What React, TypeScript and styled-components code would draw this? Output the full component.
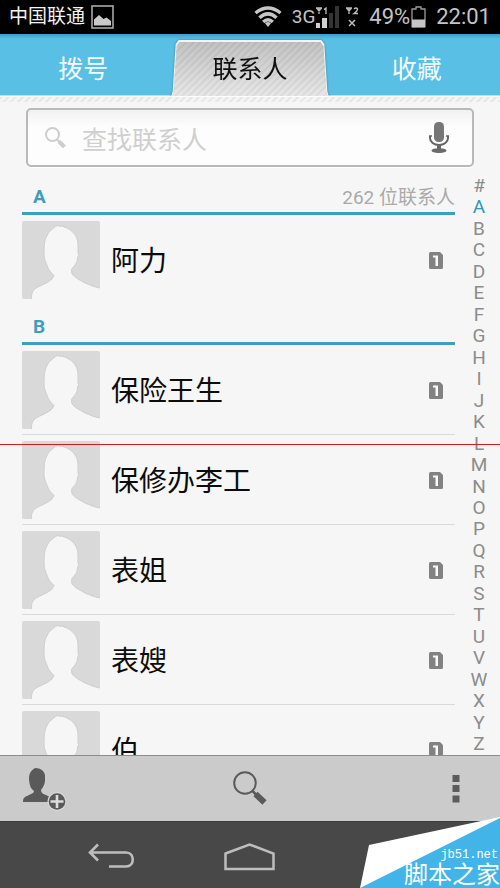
import React from "react";
import styled, { createGlobalStyle, css } from "styled-components";

const GlobalStyle = createGlobalStyle`
  *, *::before, *::after { box-sizing: border-box; }
  body { margin: 0; background: #f6f6f6; }
  button { border: 0; padding: 0; background: none; font: inherit; color: inherit; cursor: pointer; }
  ul, ol, h1, h2, p { margin: 0; padding: 0; list-style: none; }
  svg { display: block; flex: none; }
`;

const Screen = styled.div`
  position: relative;
  display: flex;
  flex-direction: column;
  height: 100vh;
  overflow: hidden;
  background: #f6f6f6;
  font-family: Roboto, "Noto Sans CJK SC", sans-serif;
  color: #0c0c0c;
`;

const StatusBar = styled.header`
  display: flex;
  align-items: center;
  justify-content: space-between;
  flex: none;
  height: 34px;
  padding: 0 9px;
  background: #000;
  color: #c4c4c4;
  font-size: 22px;
  line-height: 38px;
`;

const StatusGroup = styled.div<{ $gap: number }>`
  display: flex;
  align-items: center;
  gap: ${(p) => p.$gap}px;
`;

const Carrier = styled.span`
  color: #f4f4f4;
  font-size: 19px;
`;

const Network = styled.span`
  font-size: 19px;
`;

const Signal = styled.span`
  display: flex;
  align-items: center;
`;

const Battery = styled.span`
  display: flex;
  align-items: center;
  gap: 1px;
`;

const Tabs = styled.nav`
  display: grid;
  grid-template-columns: repeat(3, 1fr);
  flex: none;
  height: 62px;
  padding-top: 6px;
  overflow: hidden;
  background: linear-gradient(#3e9dc2 0, #5abfe4 5px);
  box-shadow: inset 0 -1px #a9e6fa;
`;

const tabShape = css`
  content: "";
  position: absolute;
  z-index: -1;
  clip-path: polygon(0 100%, 2px calc(100% - 2px), 3px calc(100% - 6px), 6px 4px, 9px 0, calc(100% - 9px) 0, calc(100% - 6px) 4px, calc(100% - 3px) calc(100% - 6px), calc(100% - 2px) calc(100% - 2px), 100% 100%);
`;

const Tab = styled.button<{ $active?: boolean }>`
  position: relative;
  z-index: 0;
  padding-top: 4px;
  color: #f2fbff;
  font-size: 25px;
  line-height: 52px;
  ${(p) =>
    p.$active &&
    css`
      color: #101010;
      filter: drop-shadow(0 0 1px #37809c);
      &::before {
        ${tabShape}
        inset: 0 3px -1px;
        background: #f3f3f3;
      }
      &::after {
        ${tabShape}
        inset: 2px 4px -1px;
        background:
          linear-gradient(rgba(182, 182, 182, 0.7), rgba(236, 236, 236, 0.7)),
          repeating-linear-gradient(135deg, #bdbdbd 0 2px, #dedede 2px 5px);
      }
    `}
`;

const TabShelf = styled.div`
  flex: none;
  height: 6px;
  border-top: 1px solid #fdfdfd;
  background: repeating-linear-gradient(135deg, #e6e6e6 0 2px, #f4f4f4 2px 5px);
`;

const SearchArea = styled.form`
  flex: none;
  padding: 6px 26px 8px;
`;

const SearchField = styled.label`
  display: flex;
  align-items: center;
  height: 59px;
  padding: 0 23px 0 17px;
  border: 2px solid #b9b9b9;
  border-radius: 5px;
  background: linear-gradient(#f1f1f1, #fdfdfd 30%);
  box-shadow: 0 1px #fff;
`;

const SearchInput = styled.input`
  flex: 1;
  min-width: 0;
  margin: 0 12px 0 16px;
  padding: 6px 0 0;
  border: 0;
  outline: 0;
  background: none;
  font: inherit;
  font-size: 25px;
  line-height: 36px;
  &::placeholder {
    color: #cfcfcf;
    opacity: 1;
  }
`;

const Body = styled.main`
  display: flex;
  flex: 1;
  min-height: 0;
`;

const ContactList = styled.div`
  flex: 1;
  min-width: 0;
  padding-left: 22px;
  overflow: hidden;
`;

const SectionHeader = styled.div`
  display: flex;
  align-items: center;
  justify-content: space-between;
  height: 40px;
  padding: 6px 0 0 11px;
  border-bottom: 3px solid #3d9fbd;
`;

const SectionTitle = styled.h2`
  color: #3c9fbd;
  font-size: 19px;
  line-height: 24px;
  font-weight: 700;
`;

const Count = styled.p`
  padding-top: 2px;
  color: #a9a9a9;
  font-size: 19px;
  line-height: 24px;
`;

const ContactItem = styled.li`
  border-bottom: 1px solid #dadada;
  &:last-child {
    border-bottom-color: transparent;
  }
`;

const ContactButton = styled.button`
  display: flex;
  align-items: center;
  width: 100%;
  padding: 6px 12px 5px 0;
  text-align: left;
`;

const Name = styled.span`
  flex: 1;
  margin-left: 11px;
  padding-top: 4px;
  font-size: 28px;
  line-height: 40px;
`;

const LetterIndex = styled.nav`
  display: flex;
  flex-direction: column;
  flex: none;
  width: 45px;
`;

const IndexLink = styled.a<{ $current: boolean }>`
  display: flex;
  flex: 1;
  align-items: center;
  justify-content: center;
  min-height: 0;
  padding-left: 3px;
  color: ${(p) => (p.$current ? "#2c9ab6" : "#8c8c8c")};
  font-size: 19px;
  font-weight: 400;
  line-height: 20px;
  text-decoration: none;
`;

const Toolbar = styled.div`
  display: grid;
  grid-template-columns: repeat(3, 1fr);
  align-items: center;
  flex: none;
  height: 66px;
  padding: 0 22px;
  border-top: 1px solid #8c8c8c;
  background: #cbcbcb;
`;

const ToolButton = styled.button<{ $align: "start" | "center" | "end" }>`
  justify-self: ${(p) => p.$align};
  padding: 0 ${(p) => (p.$align === "end" ? 18 : 0)}px;
`;

const NavBar = styled.nav`
  display: flex;
  align-items: center;
  flex: none;
  height: 67px;
  padding: 3px 45% 0 88px;
  justify-content: space-between;
  border-top: 1px solid #3c3c3c;
  background: #484848;
`;

const GuideLine = styled.div`
  position: absolute;
  inset: 50% 0 auto;
  height: 1px;
  background: #d01c1c;
`;

const Watermark = styled.div`
  position: absolute;
  right: 0;
  bottom: 0;
  color: #fff;
  text-align: right;
`;

const WatermarkText = styled.div`
  position: absolute;
  right: 0;
  bottom: 0;
`;

const Site = styled.p`
  padding-right: 2px;
  font-family: "Liberation Mono", monospace;
  font-size: 12px;
  line-height: 14px;
`;

const SiteName = styled.p`
  font-size: 24px;
  line-height: 26px;
  white-space: nowrap;
`;

const PictureIcon = () => (
  <svg width="23" height="24" viewBox="0 0 23 24" fill="none" aria-hidden="true">
    <rect x="1" y="1" width="21" height="22" stroke="#a8a8a8" strokeWidth="1.6" />
    <path d="M3 20.500v-6l5-4.500 4.500 4 3-1.500 4.500 3.500v4.500z" fill="#c8c8c8" />
  </svg>
);

const WifiIcon = () => (
  <svg width="28" height="22" viewBox="0 0 28 22" fill="none" stroke="#c6c6c6" strokeWidth="3.400" aria-hidden="true">
    <path d="M1.500 7Q14-3 26.500 7M5.500 11.800Q14 4 22.500 11.800M9.200 16Q14 11.500 18.800 16" />
    <path d="M11 17.200Q14 15 17 17.200L14 21z" fill="#c6c6c6" stroke="none" />
  </svg>
);

const SignalIcon = () => (
  <svg width="44" height="24" viewBox="0 0 44 24" fill="none" aria-hidden="true">
    <path d="M1 3h6M4 3v6M1.500 3L4 6l2.500-3M9 4.500l2-1.500v6" stroke="#bcbcbc" strokeWidth="1.300" />
    <path d="M1 18h4v5H1zM7 13h5v10H7z" fill="#d0d0d0" />
    <path d="M14 8h4v15h-4zM20 1h4v22h-4z" fill="#343434" />
    <path d="M31 3h6M34 3v6M31.500 3L34 6l2.500-3M39 4q2-2 3.500 0 0 2-3.500 4.500h4" stroke="#bcbcbc" strokeWidth="1.300" />
    <path d="M34 15l6 6M40 15l-6 6" stroke="#bcbcbc" strokeWidth="1.500" />
  </svg>
);

const BatteryIcon = () => (
  <svg width="15" height="22" viewBox="0 0 15 22" fill="none" aria-hidden="true">
    <path d="M1 20.500V3h4V1h5v2h4v17.500z" stroke="#9b9b9b" strokeWidth="1.300" />
    <path d="M1 13.500h13v8H1z" fill="#c6c6c6" />
  </svg>
);

const SmallSearchIcon = () => (
  <svg width="21" height="21" viewBox="0 0 21 21" fill="none" stroke="#cdcdcd" aria-hidden="true">
    <circle cx="7.500" cy="7.500" r="6.500" strokeWidth="2" />
    <path d="M12 12.500l2.500 2.500" strokeWidth="2" />
    <path d="M14 14.500l5.500 5.500" strokeWidth="4" />
  </svg>
);

const MicIcon = () => (
  <svg width="20" height="31" viewBox="0 0 20 31" fill="none" aria-hidden="true">
    <rect x="5" y="0" width="10" height="20" rx="4.500" fill="#777" />
    <path d="M1 14v2c0 4 4 7 9 7s9-3 9-7v-2" stroke="#666" strokeWidth="2" />
    <path d="M0 14h3M17 14h3" stroke="#666" strokeWidth="1.500" />
    <path d="M8 23h4v3.500c3 0 5 .6 5.500 2 0 1.500-3 2.500-7.500 2.500s-7.500-1-7.500-2.500c.5-1.400 2.500-2 5.500-2z" fill="#6b6b6b" />
  </svg>
);

const silhouette =
  "M9.500 78c0-5 0-7 4-10.500 5-3.500 12-5 16.500-9.500l2-3.500c-3-3-5.500-5.500-6.500-9-1.500-4-3.500-8-3.500-12.500 0-12 1-16 5.500-22.500L31 7.500l2.500-2 2.500-1 2 .8 2-.3 5 2c6 3 10.500 8 11 16V32l.7 1.500-1.200 3c0 6-3.500 8-6 12l.5 4.500c3 4 8 6 13 9 5 2 9 4 14.500 5";

const Avatar = () => (
  <svg width="78" height="78" viewBox="0 0 78 78" aria-hidden="true">
    <rect width="78" height="78" rx="2" fill="#d9d9d9" />
    <path d={`${silhouette}H78V78z`} fill="#f6f6f6" />
    <path d={silhouette} fill="none" stroke="#cfcfcf" strokeWidth="1" />
  </svg>
);

const SimIcon = () => (
  <svg width="14" height="17" viewBox="0 0 14 17" role="img" aria-label="SIM 1">
    <path d="M1.500 0H11l3 3v12.500a1.500 1.500 0 0 1-1.500 1.500h-11A1.500 1.500 0 0 1 0 15.500v-14A1.500 1.500 0 0 1 1.500 0z" fill="#828282" />
    <path d="M4 3.500h5V14H6.500V5.500H4z" fill="#fafafa" />
  </svg>
);

const AddContactIcon = () => (
  <svg width="45" height="44" viewBox="0 0 45 44" aria-hidden="true">
    <path
      d="M1 35c0-5 2-5 6-7 3-1.500 5-2 5-4-3-2-4-5-4.500-8C6 8 8 4 13 1c6 0 9 3 10 7v6c-.5 4-2 6-4 9 0 3 2 4 5 5 3 1.500 4 2 5 4l-2 3z"
      fill="#5a5a5a"
    />
    <circle cx="35" cy="34.500" r="9.500" fill="#d8d8d8" />
    <circle cx="35" cy="34.500" r="8.300" fill="#5a5a5a" />
    <path d="M35 28v13M28.500 34.500h13" stroke="#dcdcdc" strokeWidth="2.600" />
  </svg>
);

const SearchIcon = () => (
  <svg width="34" height="35" viewBox="0 0 34 35" fill="none" stroke="#5a5a5a" aria-hidden="true">
    <circle cx="12" cy="12" r="10.800" strokeWidth="2" />
    <path d="M19.500 20l4 4" strokeWidth="2.500" />
    <path d="M22.500 23l9 8.500" strokeWidth="6" />
  </svg>
);

const MoreIcon = () => (
  <svg width="8" height="29" viewBox="0 0 8 29" fill="#5c5c5c" aria-hidden="true">
    <path d="M.5 1h7v7h-7zM.5 11h7v7h-7zM.5 21.500h7v7h-7z" />
  </svg>
);

const BackIcon = () => (
  <svg width="47" height="27" viewBox="0 0 47 27" fill="none" stroke="#bdbdbd" strokeWidth="2.600" aria-hidden="true">
    <path d="M10 1.500L2 9.500l8 8M2 9.500h36c9 0 9 14 0 14H21" />
  </svg>
);

const HomeIcon = () => (
  <svg width="51" height="28" viewBox="0 0 51 28" fill="none" stroke="#bdbdbd" strokeWidth="2.500" aria-hidden="true">
    <path d="M1.500 10.500l24-9 24 9V26h-48z" />
  </svg>
);

const WatermarkShape = () => (
  <svg width="140" height="71" viewBox="0 0 140 71" aria-hidden="true">
    <path d="M9 28L140 0v71H0z" fill="#fff" />
    <path d="M0 71L140 1v70z" fill="#43b4e8" />
  </svg>
);

const sections = [
  { letter: "A", names: ["阿力"] },
  { letter: "B", names: ["保险王生", "保修办李工", "表姐", "表嫂", "伯"] },
];

const letters = "#ABCDEFGHIJKLMNOPQRSTUVWXYZ".split("");

export default function App() {
  return (
    <>
      <GlobalStyle />
      <Screen>
        <StatusBar>
          <StatusGroup $gap={6}>
            <Carrier>中国联通</Carrier>
            <PictureIcon />
          </StatusGroup>
          <StatusGroup $gap={10}>
            <WifiIcon />
            <Signal>
              <Network>3G</Network>
              <SignalIcon />
            </Signal>
            <Battery>
              49%
              <BatteryIcon />
            </Battery>
            <span>22:01</span>
          </StatusGroup>
        </StatusBar>

        <Tabs>
          <Tab type="button">拨号</Tab>
          <Tab type="button" $active aria-current="page">
            联系人
          </Tab>
          <Tab type="button">收藏</Tab>
        </Tabs>
        <TabShelf />

        <SearchArea role="search" onSubmit={(e) => e.preventDefault()}>
          <SearchField>
            <SmallSearchIcon />
            <SearchInput type="text" placeholder="查找联系人" aria-label="查找联系人" />
            <button type="button" aria-label="语音搜索">
              <MicIcon />
            </button>
          </SearchField>
        </SearchArea>

        <Body>
          <ContactList>
            {sections.map((section, i) => (
              <section key={section.letter} id={section.letter}>
                <SectionHeader>
                  <SectionTitle>{section.letter}</SectionTitle>
                  {i === 0 && <Count>262 位联系人</Count>}
                </SectionHeader>
                <ul>
                  {section.names.map((name) => (
                    <ContactItem key={name}>
                      <ContactButton type="button">
                        <Avatar />
                        <Name>{name}</Name>
                        <SimIcon />
                      </ContactButton>
                    </ContactItem>
                  ))}
                </ul>
              </section>
            ))}
          </ContactList>
          <LetterIndex aria-label="字母索引">
            {letters.map((letter) => (
              <IndexLink key={letter} href={`#${letter}`} $current={letter === "A"}>
                {letter}
              </IndexLink>
            ))}
          </LetterIndex>
        </Body>

        <Toolbar>
          <ToolButton type="button" $align="start" aria-label="新建联系人">
            <AddContactIcon />
          </ToolButton>
          <ToolButton type="button" $align="center" aria-label="搜索">
            <SearchIcon />
          </ToolButton>
          <ToolButton type="button" $align="end" aria-label="更多">
            <MoreIcon />
          </ToolButton>
        </Toolbar>

        <NavBar>
          <button type="button" aria-label="返回">
            <BackIcon />
          </button>
          <button type="button" aria-label="主屏幕">
            <HomeIcon />
          </button>
        </NavBar>

        <GuideLine />
        <Watermark>
          <WatermarkShape />
          <WatermarkText>
            <Site>jb51.net</Site>
            <SiteName>脚本之家</SiteName>
          </WatermarkText>
        </Watermark>
      </Screen>
    </>
  );
}
